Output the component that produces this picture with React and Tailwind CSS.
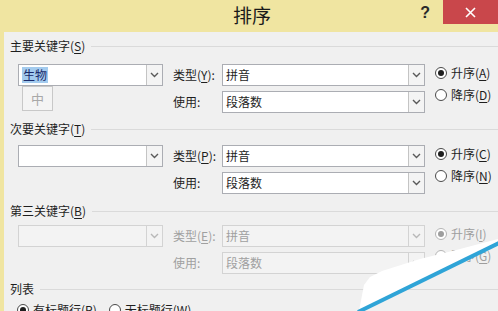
import React from 'react';

const font = "font-['Noto_Sans_CJK_SC',sans-serif]";

function Key({ children }) {
  return <span className="underline underline-offset-2">{children}</span>;
}

function Chevron({ disabled }) {
  return (
    <svg width="9" height="6" viewBox="0 0 9 6">
      <path d="M1 1 L4.5 4.5 L8 1" fill="none" stroke={disabled ? '#B8B8B8' : '#5A5A5A'} strokeWidth="1.4" />
    </svg>
  );
}

function Combo({ value, selected, disabled }) {
  return (
    <div
      className={`h-[22px] flex border ${
        disabled ? 'border-[#D3D3D3] bg-[#F3F3F3]' : 'border-[#ABADB3] bg-white'
      }`}
    >
      <div className={`flex-1 flex items-center pl-[3px] text-[12px] ${disabled ? 'text-[#A0A0A0]' : 'text-[#1E1E1E]'}`}>
        {selected ? <span className="bg-[#A3CBEE] text-[#1A2A6A] px-[1px] leading-[16px]">{value}</span> : value}
      </div>
      <div
        className={`w-[16px] flex items-center justify-center border-l ${
          disabled ? 'border-[#D3D3D3] bg-[#F3F3F3]' : 'border-[#C4C4C4] bg-[#F4F4F4]'
        }`}
      >
        <Chevron disabled={disabled} />
      </div>
    </div>
  );
}

function Radio({ checked, disabled, children }) {
  const ring = disabled ? 'border-[#B5B5B5]' : 'border-[#4A4A4A]';
  const dot = disabled ? 'bg-[#9E9E9E]' : 'bg-[#1E1E1E]';
  return (
    <div className={`h-[16px] flex items-center gap-[4px] text-[12px] ${disabled ? 'text-[#9E9E9E]' : 'text-[#1E1E1E]'}`}>
      <span className={`w-[12px] h-[12px] rounded-full border bg-white flex items-center justify-center ${ring}`}>
        {checked && <span className={`w-[6px] h-[6px] rounded-full ${dot}`} />}
      </span>
      <span>{children}</span>
    </div>
  );
}

function Header({ children, className }) {
  return (
    <div className={`h-[14px] flex items-center pl-[6px] gap-[6px] text-[12px] text-[#1E1E1E] ${className}`}>
      <span className="leading-[14px] whitespace-nowrap">{children}</span>
      <div className="flex-1 border-t border-[#DADADA]" />
    </div>
  );
}

function Section({ title, className, rowsTop, keyCombo, typeLabel, disabled, asc, desc, ime }) {
  const label = disabled ? 'text-[#A0A0A0]' : 'text-[#1E1E1E]';
  return (
    <div className={className}>
      <Header>{title}</Header>
      <div className={`grid grid-cols-[145px_59px_203px_1fr] grid-rows-[22px_22px] gap-y-[5px] ml-[14px] ${rowsTop}`}>
        <Combo {...keyCombo} disabled={disabled} />
        <div className={`pl-[10px] flex items-center text-[12px] ${label}`}>{typeLabel}</div>
        <Combo value="拼音" disabled={disabled} />
        <div className="row-span-2 pl-[10px] pt-[1px] flex flex-col gap-[6px]">
          <Radio checked disabled={disabled}>{asc}</Radio>
          {desc && <Radio disabled={disabled}>{desc}</Radio>}
        </div>
        <div>
          {ime && (
            <div className="ml-[4px] -mt-[5px] w-[31px] h-[25px] border border-[#C8C8C8] bg-[#F4F4F4] flex items-center justify-center text-[13px] text-[#A8A8A8]">
              中
            </div>
          )}
        </div>
        <div className={`pl-[10px] flex items-center text-[12px] ${label}`}>使用:</div>
        <Combo value="段落数" disabled={disabled} />
      </div>
    </div>
  );
}

export default function App() {
  return (
    <div className={`relative w-[498px] h-[311px] overflow-hidden bg-[#F0E5A1] flex flex-col ${font}`}>
      {/* Title bar */}
      <div className="h-[32px] flex items-start shrink-0">
        <span className="ml-[233px] mt-[3px] text-[19px] leading-[24px] text-[#1A1A1A]">排序</span>
        <span className="ml-auto mr-[13px] mt-[5px] text-[16px] font-bold leading-[16px] text-[#2A2A2A] font-['Liberation_Sans',sans-serif]">
          ?
        </span>
        <div className="w-[55px] h-[24px] bg-[#C9474B] flex items-center justify-center">
          <svg width="11" height="11" viewBox="0 0 11 11">
            <path d="M1 1 L10 10 M10 1 L1 10" stroke="#FFFFFF" strokeWidth="1.6" />
          </svg>
        </div>
      </div>

      {/* Body */}
      <div className="flex-1 ml-[4px] bg-[#F0F0F0] pt-[7px]">
        <Section
          title={<>主要关键字(<Key>S</Key>)</>}
          rowsTop="mt-[11px]"
          keyCombo={{ value: '生物', selected: true }}
          typeLabel={<span>类型(<Key>Y</Key>):</span>}
          asc={<>升序(<Key>A</Key>)</>}
          desc={<>降序(<Key>D</Key>)</>}
          ime
        />
        <Section
          className="mt-[9px]"
          title={<>次要关键字(<Key>T</Key>)</>}
          rowsTop="mt-[9px]"
          keyCombo={{ value: '' }}
          typeLabel={<span>类型(<Key>P</Key>):</span>}
          asc={<>升序(<Key>C</Key>)</>}
          desc={<>降序(<Key>N</Key>)</>}
        />
        <Section
          className="mt-[10px]"
          title={<>第三关键字(<Key>B</Key>)</>}
          rowsTop="mt-[7px]"
          keyCombo={{ value: '' }}
          typeLabel={<span>类型(<Key>E</Key>):</span>}
          asc={<>升序(<Key>I</Key>)</>}
          desc={<>降序(<Key>G</Key>)</>}
          disabled
        />
        <Header className="mt-[8px]">列表</Header>
        <div className="mt-[6px] ml-[13px] flex gap-[12px]">
          <Radio checked>有标题行(<Key>R</Key>)</Radio>
          <Radio>无标题行(<Key>W</Key>)</Radio>
        </div>
      </div>

      {/* page-curl watermark */}
      <svg className="absolute left-[355px] top-[235px]" width="143" height="76" viewBox="355 235 143 76">
        <polygon
          points="359,311 364,285 370,277 382,271 420,259 460,249 498,239 498,244 360,311"
          fill="#FFFFFF"
        />
        <line x1="358" y1="312" x2="499" y2="243" stroke="#2FA4D7" strokeWidth="4" />
      </svg>
    </div>
  );
}
